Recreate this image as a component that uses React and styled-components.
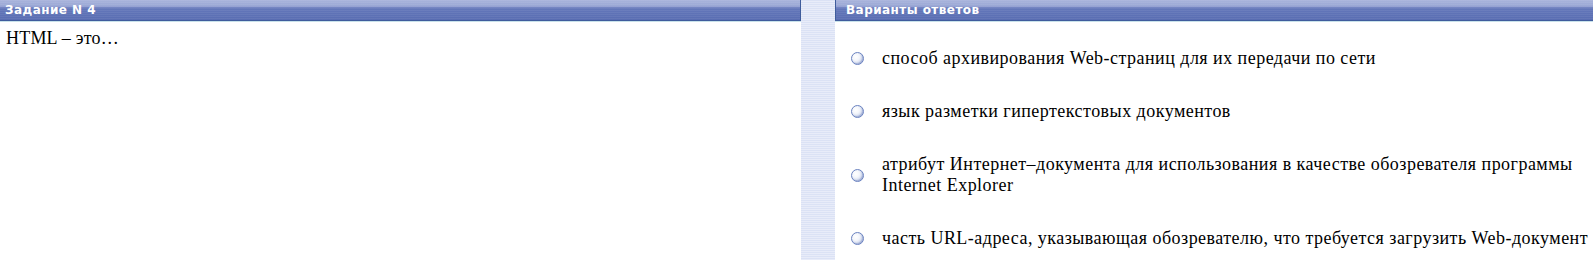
import React from "react";
import styled, { createGlobalStyle } from "styled-components";

const Global = createGlobalStyle`
  html, body { margin: 0; padding: 0; background: #fff; }
  #root { height: 260px; overflow: hidden; }
`;

const Page = styled.div`
  display: grid;
  grid-template-columns: 801px 34px 1fr;
  height: 260px;
`;

const Panel = styled.section`
  display: flex;
  flex-direction: column;
  min-width: 0;
`;

const Header = styled.div`
  height: 21px;
  box-sizing: border-box;
  padding-left: ${(p) => p.$pad}px;
  display: flex;
  align-items: center;
  color: #fff;
  font-family: "DejaVu Sans", Verdana, sans-serif;
  font-size: 12px;
  font-weight: bold;
  letter-spacing: 0.45px;
  border-bottom: 1px solid #3f5c9c;
  ${(p) => (p.$side === "left" ? "border-right: 1px solid #3f5c9c;" : "border-left: 1px solid #3f5c9c;")}
  background:
    repeating-linear-gradient(to bottom, rgba(255,255,255,0.06) 0 1px, rgba(0,0,0,0) 1px 2px),
    linear-gradient(to bottom, #a9b4dc 0, #9aa7d5 6px, #8593cb 7px, #6477ba 8px, #5e72b6 14px, #596db2 20px);
  box-shadow: 0 1px 0 #c9e2ea;
`;

const Divider = styled.div`
  background: repeating-linear-gradient(to bottom, #dbe2f5 0 1px, #e8ecf9 1px 2px);
`;

const Question = styled.div`
  padding: 7px 0 0 6px;
  font-family: "Liberation Serif", "Times New Roman", serif;
  font-size: 18px;
  letter-spacing: 0.2px;
  color: #000;
`;

const Options = styled.div`
  display: flex;
  flex-direction: column;
  padding-top: 11px;
`;

const Option = styled.label`
  display: flex;
  align-items: center;
  gap: 18px;
  padding: 16px 0 16px 16px;
  font-family: "Liberation Serif", "Times New Roman", serif;
  font-size: 18px;
  letter-spacing: 0.47px;
  line-height: 21px;
  color: #000;
  white-space: nowrap;
`;

const Radio = styled.span`
  flex: none;
  width: 11px;
  height: 11px;
  border-radius: 50%;
  border: 1px solid #6a82c0;
  background: radial-gradient(circle at 35% 35%, #ffffff 0, #f4f6fb 35%, #c9d3ec 75%, #a3b3dd 100%);
  box-shadow: inset -1px -1px 1px rgba(90,110,170,0.35);
`;

const Text = styled.span`
  display: block;
`;

const options = [
  ["способ архивирования Web-страниц для их передачи по сети"],
  ["язык разметки гипертекстовых документов"],
  ["атрибут Интернет–документа для использования в качестве обозревателя программы", "Internet Explorer"],
  ["часть URL-адреса, указывающая обозревателю, что требуется загрузить Web-документ"],
];

export default function App() {
  return (
    <>
      <Global />
      <Page>
        <Panel>
          <Header $side="left" $pad={5}>Задание N 4</Header>
          <Question>HTML – это…</Question>
        </Panel>
        <Divider />
        <Panel>
          <Header $side="right" $pad={10}>Варианты ответов</Header>
          <Options>
            {options.map((lines, i) => (
              <Option key={i}>
                <Radio />
                <Text>
                  {lines.map((l, j) => (
                    <React.Fragment key={j}>
                      {j > 0 && <br />}
                      {l}
                    </React.Fragment>
                  ))}
                </Text>
              </Option>
            ))}
          </Options>
        </Panel>
      </Page>
    </>
  );
}
